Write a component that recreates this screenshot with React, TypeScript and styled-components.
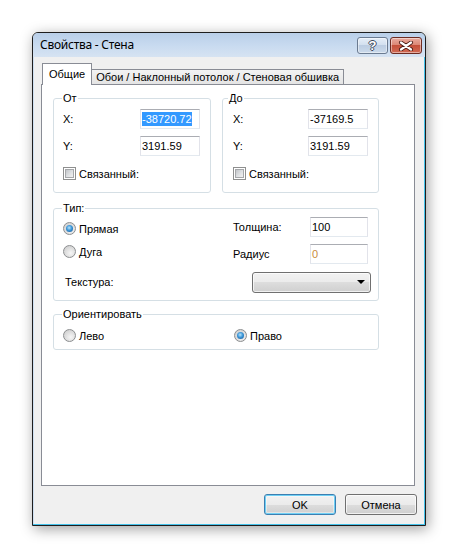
import React from "react";
import styled, { createGlobalStyle } from "styled-components";

const GlobalStyle = createGlobalStyle`
  html, body {
    margin: 0;
    padding: 0;
    background: #ffffff;
  }
  body {
    font-family: "Liberation Sans", Arial, sans-serif;
    font-size: 11px;
    color: #000;
  }
`;

const Screen = styled.div`
  width: 458px;
  height: 558px;
  padding: 32px 0 0 32px;
  box-sizing: border-box;
`;

const Window = styled.div`
  width: 394px;
  height: 494px;
  box-sizing: border-box;
  border: 1px solid #1e1e1e;
  border-radius: 6px 6px 0 0;
  background: #f0f0f0;
  box-shadow: inset -1px -1px 0 #44c2ea, inset 1px 0 0 #cfe0f1,
    2px 3px 14px rgba(0, 0, 0, 0.38);
  display: flex;
  flex-direction: column;
  overflow: hidden;
`;

const TitleBar = styled.div`
  height: 24px;
  flex: none;
  display: flex;
  align-items: flex-start;
  padding: 4px 3px 0 7px;
  box-sizing: border-box;
  background: linear-gradient(#b9cfe9 0%, #c9dbf0 55%, #d6e3f2 100%);
`;

const Title = styled.div`
  flex: 1;
  font-family: "Noto Sans", "Open Sans", sans-serif;
  font-size: 12px;
  letter-spacing: -0.25px;
  line-height: 16px;
  color: #000;
`;

const CaptionButton = styled.div<{ $close?: boolean }>`
  height: 17px;
  width: ${(p) => (p.$close ? "32px" : "31px")};
  margin-left: ${(p) => (p.$close ? "2px" : "0")};
  box-sizing: border-box;
  border-radius: 3px;
  border: 1px solid ${(p) => (p.$close ? "#6d2b22" : "#6b7b91")};
  background: ${(p) =>
    p.$close
      ? "linear-gradient(#e9ab9f 0%, #dc8876 45%, #c5503a 50%, #d16b55 100%)"
      : "linear-gradient(#e6eef8 0%, #d3e0ef 45%, #bccde2 50%, #cbdaeb 100%)"};
  box-shadow: inset 0 0 0 1px rgba(255, 255, 255, 0.45);
  display: flex;
  align-items: center;
  justify-content: center;
`;

const HelpGlyph = styled.span`
  font-family: "Liberation Sans", Arial, sans-serif;
  font-weight: bold;
  font-size: 13px;
  line-height: 13px;
  color: #ffffff;
  text-shadow: 1px 0 0 #3e4b5e, -1px 0 0 #3e4b5e, 0 1px 0 #3e4b5e,
    0 -1px 0 #3e4b5e;
`;

const Body = styled.div`
  flex: 1;
  display: flex;
  flex-direction: column;
  padding: 6px 9px 0 8px;
`;

const TabRow = styled.div`
  height: 21px;
  display: flex;
  align-items: flex-end;
  padding-left: 1px;
`;

const Tab = styled.div<{ $active?: boolean }>`
  box-sizing: border-box;
  display: flex;
  align-items: center;
  border: 1px solid #898c95;
  border-bottom: none;
  white-space: nowrap;
  font-size: 11px;
  ${(p) =>
    p.$active
      ? `
    height: 22px;
    margin-bottom: -1px;
    padding: 0 6px 2px 6px;
    background: #ffffff;
    position: relative;
    z-index: 1;
  `
      : `
    height: 15px;
    margin-left: -1px;
    padding: 0 4px 0 4px;
    background: linear-gradient(#f3f3f3, #e4e4e4);
  `}
`;

const Page = styled.div`
  width: 374px;
  height: 402px;
  box-sizing: border-box;
  border: 1px solid #898c95;
  background: #ffffff;
  padding: 7px 35px 0 11px;
  display: flex;
  flex-direction: column;
`;

const TwoGroups = styled.div`
  display: grid;
  grid-template-columns: 158px 157px;
  column-gap: 11px;
`;

const Group = styled.fieldset<{ $pad?: string; $gap?: number }>`
  margin: ${(p) => p.$gap ?? 0}px 0 0 0;
  padding: ${(p) => p.$pad ?? "4px 10px 12px 9px"};
  border: 1px solid #d5dfe5;
  border-radius: 3px;
  min-width: 0;
`;

const Legend = styled.legend<{ $shift?: number }>`
  padding: 0 1px;
  margin-left: ${(p) => p.$shift ?? -1}px;
  font-size: 11px;
  line-height: 13px;
`;

const CoordGrid = styled.div`
  display: grid;
  grid-template-columns: 1fr 60px;
  grid-template-rows: 20px 20px;
  row-gap: 7px;
  align-items: center;
`;

const Field = styled.div<{ $w?: number; $muted?: boolean }>`
  width: ${(p) => p.$w ?? 60}px;
  height: 20px;
  box-sizing: border-box;
  border: 1px solid #e2e3ea;
  border-top-color: #abadb3;
  border-bottom-color: #e3e9ef;
  background: #ffffff;
  padding: 0 1px;
  display: flex;
  align-items: center;
  color: ${(p) => (p.$muted ? "#c98a3c" : "#000")};
  white-space: nowrap;
  overflow: hidden;
`;

const Selected = styled.span`
  background: #3399ff;
  color: #ffffff;
  line-height: 14px;
`;

const CheckRow = styled.label`
  display: flex;
  align-items: center;
  gap: 3px;
  margin-top: 11px;
  height: 13px;
`;

const CheckBox = styled.span`
  width: 13px;
  height: 13px;
  flex: none;
  box-sizing: border-box;
  border: 1px solid #8e8f8f;
  background: #ffffff;
  padding: 1px;
  &::after {
    content: "";
    display: block;
    width: 9px;
    height: 9px;
    box-sizing: border-box;
    border: 1px solid #a5a7aa;
    background: linear-gradient(135deg, #c2c5c9 0%, #dfe1e3 55%, #f1f1f1 100%);
  }
`;

const RadioRow = styled.label<{ $indent?: number; $top?: number }>`
  display: flex;
  align-items: center;
  gap: 3px;
  height: 13px;
  margin-left: ${(p) => p.$indent ?? 0}px;
  ${(p) => (p.$top !== undefined ? `align-self: start; margin-top: ${p.$top}px;` : "")}
`;

const Radio = styled.span<{ $checked?: boolean }>`
  width: 13px;
  height: 13px;
  flex: none;
  box-sizing: border-box;
  border-radius: 50%;
  border: 1px solid #8c8e90;
  background: radial-gradient(circle at 60% 65%, #f6f6f6 0%, #dcdcdc 55%, #c9c9c9 100%);
  display: flex;
  align-items: center;
  justify-content: center;
  &::after {
    content: "";
    width: 7px;
    height: 7px;
    border-radius: 50%;
    background: ${(p) =>
      p.$checked
        ? "radial-gradient(circle at 45% 40%, #b9e4fb 0%, #3d97d8 45%, #0f4f8f 100%)"
        : "transparent"};
  }
`;

const TypeGrid = styled.div`
  display: grid;
  grid-template-columns: 170px 77px 58px;
  grid-template-rows: 20px 20px 21px;
  row-gap: 7px;
  align-items: center;
`;

const Combo = styled.div`
  grid-column: 2 / 4;
  justify-self: end;
  margin-right: -3px;
  margin-top: 1px;
  width: 119px;
  height: 21px;
  box-sizing: border-box;
  border: 1px solid #707070;
  border-radius: 3px;
  background: linear-gradient(#f2f2f2 0%, #ebebeb 50%, #dddddd 50%, #cfcfcf 100%);
  box-shadow: inset 0 0 0 1px rgba(255, 255, 255, 0.7);
  display: flex;
  align-items: center;
  justify-content: flex-end;
  padding-right: 5px;
`;

const Arrow = styled.span`
  width: 0;
  height: 0;
  border-left: 4px solid transparent;
  border-right: 4px solid transparent;
  border-top: 4px solid #000;
`;

const OrientRow = styled.div`
  display: grid;
  grid-template-columns: 171px 1fr;
  height: 13px;
  align-items: center;
`;

const Buttons = styled.div`
  display: flex;
  justify-content: flex-end;
  gap: 9px;
  margin-top: 8px;
  margin-right: -1px;
`;

const Button = styled.div<{ $default?: boolean }>`
  width: 72px;
  height: 21px;
  box-sizing: border-box;
  border-radius: 3px;
  border: 1px solid ${(p) => (p.$default ? "#3c7fb1" : "#707070")};
  background: linear-gradient(#f2f2f2 0%, #ebebeb 50%, #dddddd 50%, #cfcfcf 100%);
  box-shadow: ${(p) =>
    p.$default
      ? "inset 0 0 0 1px #6fd0f5, inset 0 0 0 2px rgba(255,255,255,0.4)"
      : "inset 0 0 0 1px rgba(255,255,255,0.7)"};
  display: flex;
  align-items: center;
  justify-content: center;
  font-size: 11px;
`;

function CoordGroup({
  title,
  x,
  y,
  selectX,
  legendShift,
  pad,
}: {
  title: string;
  x: string;
  y: string;
  selectX?: boolean;
  legendShift?: number;
  pad?: string;
}) {
  return (
    <Group $pad={pad}>
      <Legend $shift={legendShift}>{title}</Legend>
      <CoordGrid>
        <span>X:</span>
        <Field>{selectX ? <Selected>{x}</Selected> : x}</Field>
        <span>Y:</span>
        <Field>{y}</Field>
      </CoordGrid>
      <CheckRow>
        <CheckBox />
        <span>Связанный:</span>
      </CheckRow>
    </Group>
  );
}

export default function App() {
  return (
    <>
      <GlobalStyle />
      <Screen>
        <Window>
          <TitleBar>
            <Title>Свойства - Стена</Title>
            <CaptionButton>
              <HelpGlyph>?</HelpGlyph>
            </CaptionButton>
            <CaptionButton $close>
              <svg width="16" height="10" viewBox="0 0 16 10">
                <path
                  d="M3 1.5 L13 8.5 M13 1.5 L3 8.5"
                  stroke="#4a1a14"
                  strokeWidth="4"
                  strokeLinecap="round"
                  fill="none"
                />
                <path
                  d="M3 1.5 L13 8.5 M13 1.5 L3 8.5"
                  stroke="#ffffff"
                  strokeWidth="2.2"
                  strokeLinecap="round"
                  fill="none"
                />
              </svg>
            </CaptionButton>
          </TitleBar>
          <Body>
            <TabRow>
              <Tab $active>Общие</Tab>
              <Tab>Обои / Наклонный потолок / Стеновая обшивка</Tab>
            </TabRow>
            <Page>
              <TwoGroups>
                <CoordGroup title="От" x="-38720.72" y="3191.59" selectX />
                <CoordGroup
                  title="До"
                  x="-37169.5"
                  y="3191.59"
                  legendShift={-5}
                  pad="4px 10px 12px 10px"
                />
              </TwoGroups>

              <Group $gap={9} $pad="2px 10px 8px 9px">
                <Legend>Тип:</Legend>
                <TypeGrid>
                  <RadioRow $top={5}>
                    <Radio $checked />
                    <span>Прямая</span>
                  </RadioRow>
                  <span>Толщина:</span>
                  <Field $w={58}>100</Field>
                  <RadioRow $top={1}>
                    <Radio />
                    <span>Дуга</span>
                  </RadioRow>
                  <span>Радиус</span>
                  <Field $w={58} $muted>
                    0
                  </Field>
                  <RadioRow $indent={2}>
                    <span>Текстура:</span>
                  </RadioRow>
                  <Combo>
                    <Arrow />
                  </Combo>
                </TypeGrid>
              </Group>

              <Group $gap={7} $pad="8px 10px 7px 9px">
                <Legend>Ориентировать</Legend>
                <OrientRow>
                  <RadioRow>
                    <Radio />
                    <span>Лево</span>
                  </RadioRow>
                  <RadioRow>
                    <Radio $checked />
                    <span>Право</span>
                  </RadioRow>
                </OrientRow>
              </Group>
            </Page>
            <Buttons>
              <Button $default>OK</Button>
              <Button>Отмена</Button>
            </Buttons>
          </Body>
        </Window>
      </Screen>
    </>
  );
}
